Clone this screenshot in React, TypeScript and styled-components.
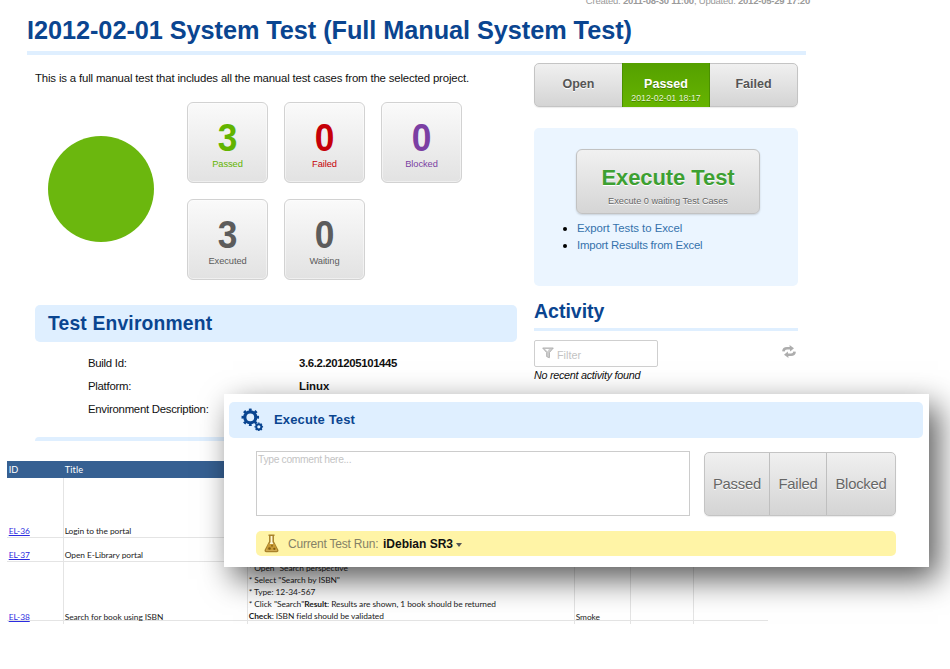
import React from "react";
import styled, { createGlobalStyle } from "styled-components";

const GlobalStyle = createGlobalStyle`
  html, body { margin: 0; padding: 0; background: #fff; overflow: hidden; }
  * { box-sizing: border-box; }
`;

const sans = `"Liberation Sans", Arial, sans-serif`;
const sheetFont = `Lato, "Open Sans", sans-serif`;
const navy = "#0a4590";
const paleBlue = "#dfefff";

const Page = styled.div`
  position: relative;
  width: 950px;
  height: 669px;
  overflow: hidden;
  background: #fff;
  color: #111;
  font-family: ${sans};
  display: flex;
  flex-direction: column;
`;

const Report = styled.section`
  height: 461px;
  flex: none;
  overflow: hidden;
`;

const Meta = styled.div`
  width: 810px;
  margin-top: -5px;
  height: 12px;
  line-height: 12px;
  font-size: 9.5px;
  letter-spacing: -0.22px;
  text-align: right;
  color: #9a9a9a;
`;

const PageTitle = styled.h1`
  margin: 0 0 0 27px;
  width: 779px;
  height: 48px;
  padding-top: 6px;
  line-height: 34px;
  font-size: 25.3px;
  letter-spacing: -0.06px;
  color: ${navy};
  border-bottom: 4px solid ${paleBlue};
  white-space: nowrap;
`;

const Columns = styled.div`
  display: flex;
  gap: 17px;
  padding-left: 35px;
`;

const Main = styled.main`
  width: 482px;
`;

const Side = styled.aside`
  width: 264px;
  padding-top: 8px;
`;

const Description = styled.p`
  margin: 15px 0 0;
  line-height: 17px;
  font-size: 11.4px;
  letter-spacing: -0.16px;
  white-space: nowrap;
`;

const Summary = styled.div`
  display: flex;
  gap: 33.5px;
  margin-top: 15px;
  height: 203px;
`;

const Pie = styled.div`
  width: 106px;
  height: 106px;
  margin: 34px 0 0 12.5px;
  border-radius: 50%;
  background: #6bb70e;
`;

const Tiles = styled.div`
  display: grid;
  grid-template-columns: repeat(3, 81px);
  grid-auto-rows: 81px;
  gap: 16px;
`;

const Tile = styled.div<{ $color: string }>`
  border: 1.5px solid #d2d2d2;
  border-radius: 6px;
  background: linear-gradient(#fafafa, #e2e2e2);
  box-shadow: inset 0 0 0 1px rgba(255, 255, 255, 0.45);
  color: ${(p) => p.$color};
  text-align: center;
  padding-top: 15px;
`;

const Count = styled.div`
  font-size: 38px;
  line-height: 41px;
  font-weight: bold;
  transform: scaleX(0.93);
`;

const TileLabel = styled.div`
  margin-top: -1px;
  font-size: 9.3px;
  line-height: 12px;
  letter-spacing: -0.08px;
`;

const SectionBar = styled.h2`
  margin: 0;
  height: 37px;
  padding-left: 13px;
  border-radius: 5px;
  background: ${paleBlue};
  color: ${navy};
  font-size: 19.3px;
  line-height: 38px;
  letter-spacing: 0.18px;
`;

const Facts = styled.dl`
  margin: 9.5px 0 0 53px;
  display: grid;
  grid-template-columns: 211px 1fr;
  grid-auto-rows: 23.4px;
  line-height: 23.4px;
  font-size: 11.4px;
  letter-spacing: -0.28px;
  dd { margin: 0; font-weight: bold; letter-spacing: -0.36px; }
  dd + dt + dd { letter-spacing: 0; }
`;

const NextBar = styled.div`
  margin-top: 15.5px;
  height: 4px;
  border-radius: 4px 4px 0 0;
  background: ${paleBlue};
`;

const Segments = styled.div<{ $columns: string; $height: number }>`
  display: grid;
  grid-template-columns: ${(p) => p.$columns};
  height: ${(p) => p.$height}px;
  border: 1.5px solid #c4c4c4;
  border-radius: 5px;
  background: linear-gradient(#f0f0f0, #d4d4d4);
  box-shadow: 0 1px 1px rgba(0, 0, 0, 0.08);
`;

const StatusSegment = styled.div<{ $active?: boolean }>`
  margin: ${(p) => (p.$active ? "-1px 0" : "0")};
  padding-top: ${(p) => (p.$active ? 13 : 12)}px;
  background: ${(p) => (p.$active ? "linear-gradient(#55a000, #66b400)" : "none")};
  border: solid ${(p) => (p.$active ? "#4b9000" : "transparent")};
  border-width: ${(p) => (p.$active ? "0 1px" : "0")};
  color: ${(p) => (p.$active ? "#fff" : "#555")};
  text-shadow: 0 1px 0 ${(p) => (p.$active ? "rgba(0,0,0,.3)" : "#fff")};
  text-align: center;
  font-size: 12.5px;
  font-weight: bold;
  line-height: 16px;
`;

const Stamp = styled.div`
  margin-top: 1px;
  font-size: 8.8px;
  font-weight: normal;
  line-height: 11px;
  color: #e6f5d3;
`;

const ActionPanel = styled.div`
  height: 158px;
  margin-top: 21px;
  padding: 21px 38px 0 42px;
  border-radius: 5px;
  background: #ebf5ff;
`;

const ExecuteButton = styled.button`
  display: block;
  width: 184px;
  height: 65px;
  padding: 7px 0 0;
  border: 1.5px solid #c2c2c2;
  border-radius: 6px;
  background: linear-gradient(#f1f1f1, #d5d5d5);
  box-shadow: 0 1px 2px rgba(0, 0, 0, 0.15);
  font-family: ${sans};
  text-align: center;
  strong {
    display: block;
    font-size: 22px;
    line-height: 29px;
    letter-spacing: -0.08px;
    color: #3da032;
    text-shadow: 0 1px 0 #fff;
  }
  span {
    display: block;
    margin-top: 2px;
    font-size: 9.2px;
    line-height: 14px;
    color: #666;
    text-shadow: 0 1px 0 #fff;
  }
`;

const Links = styled.ul`
  margin: 6px 0 0 1px;
  padding: 0;
  font-size: 11.4px;
  line-height: 17px;
  color: #000;
  li { height: 17px; }
  li::marker { font-size: 12.5px; }
  a { color: #3572ac; letter-spacing: -0.04px; }
  li + li a { letter-spacing: -0.2px; }
`;

const ActivityTitle = styled.h2`
  margin: 11px 0 0;
  height: 34px;
  line-height: 28px;
  font-size: 19.5px;
  color: ${navy};
  border-bottom: 3.5px solid ${paleBlue};
`;

const FilterRow = styled.div`
  display: flex;
  justify-content: space-between;
  margin-top: 9px;
`;

const FilterBox = styled.div`
  display: flex;
  align-items: center;
  gap: 3px;
  width: 124px;
  height: 27px;
  padding: 2px 0 0 7px;
  border: 1.5px solid #cfcfcf;
  border-radius: 2px;
  font-size: 10.8px;
  color: #c3c3c3;
  svg { margin-top: -3px; }
`;

const RefreshIcon = styled.svg`
  margin: 5px 2px 0 0;
`;

const EmptyNote = styled.em`
  display: block;
  margin-top: 1px;
  font-size: 10.8px;
  line-height: 14px;
  letter-spacing: -0.28px;
`;

const Sheet = styled.section`
  margin-left: 7px;
  width: 761px;
  height: 163px;
  overflow: hidden;
  font-family: ${sheetFont};
  font-size: 8.4px;
  letter-spacing: -0.06px;
  color: #1c1c1c;
`;

const SheetRow = styled.div<{ $height: number; $head?: boolean }>`
  display: grid;
  grid-template-columns: 56px 184px 327px 56px 63px 1fr;
  height: ${(p) => p.$height}px;
  ${(p) =>
    p.$head
      ? "background: #366092; color: #fff; font-size: 9.2px; letter-spacing: 0.1px; padding-bottom: 2px;"
      : "border-bottom: 1px solid #e4e4e4;"}
`;

const Cell = styled.div<{ $line?: boolean }>`
  display: flex;
  flex-direction: column;
  justify-content: flex-end;
  padding-left: 0.7px;
  line-height: 12px;
  white-space: pre;
  border-left: 1px solid ${(p) => (p.$line ? "#e4e4e4" : "transparent")};
  a { color: #2b2be0; text-decoration: underline; }
`;

const Steps = styled.div`
  margin-bottom: 0.6px;
`;

const Dialog = styled.section`
  position: absolute;
  left: 224px;
  top: 394px;
  width: 705px;
  height: 173px;
  padding: 8px 6px 0 5px;
  background: #fff;
  box-shadow: 9px 12px 30px rgba(0, 0, 0, 0.66);
`;

const DialogHeader = styled.header`
  display: flex;
  align-items: center;
  gap: 9px;
  height: 36px;
  padding: 0 0 1px 12px;
  border-radius: 5px;
  background: ${paleBlue};
  color: ${navy};
  font-size: 13px;
  font-weight: bold;
  letter-spacing: 0.15px;
`;

const DialogBody = styled.div`
  padding: 13px 27px 0;
`;

const Entry = styled.div`
  display: flex;
  gap: 14px;
`;

const CommentBox = styled.div`
  width: 434px;
  height: 65px;
  padding: 1px 0 0 1px;
  border: 1.5px solid #cccccc;
  font-size: 10.3px;
  line-height: 13px;
  letter-spacing: -0.32px;
  color: #c4c4c4;
`;

const Verdicts = styled(Segments)`
  margin-top: 1px;
  width: 192px;
`;

const Verdict = styled.div`
  display: flex;
  align-items: center;
  justify-content: center;
  padding-bottom: 1px;
  font-size: 14.8px;
  letter-spacing: -0.2px;
  color: #666;
  text-shadow: 0 1px 0 #fff;
  & + & { border-left: 1.5px solid #bfbfbf; }
`;

const RunBar = styled.div`
  display: flex;
  align-items: center;
  margin-top: 15px;
  width: 640px;
  height: 25px;
  padding-left: 8px;
  border-radius: 5px;
  background: #fff4a6;
  font-size: 12px;
  letter-spacing: -0.2px;
  color: #858166;
  svg { margin-right: 9px; }
  span { width: 95px; white-space: nowrap; }
  strong { font-size: 12px; letter-spacing: 0; color: #111; }
`;

const Caret = styled.i`
  margin: 3px 0 0 3px;
  border: solid transparent;
  border-width: 4px 3px 0;
  border-top-color: #555;
`;

const tiles = [
  { count: 3, label: "Passed", color: "#62b400" },
  { count: 0, label: "Failed", color: "#c60008" },
  { count: 0, label: "Blocked", color: "#7b3fa3" },
  { count: 3, label: "Executed", color: "#5c5c5c" },
  { count: 0, label: "Waiting", color: "#5c5c5c" },
];

const facts = [
  ["Build Id:", "3.6.2.201205101445"],
  ["Platform:", "Linux"],
  ["Environment Description:", ""],
];

const Gears = () => (
  <svg width="24" height="24" viewBox="0 0 24 24" fill="none" stroke={navy}>
    <circle cx="9.3" cy="9.3" r="5.5" strokeWidth="3.2" />
    <circle cx="9.3" cy="9.3" r="7.4" strokeWidth="2.8" pathLength="80" strokeDasharray="4.6 5.4" strokeDashoffset="2.3" />
    <circle cx="17.8" cy="18.8" r="2.6" strokeWidth="2" />
    <circle cx="17.8" cy="18.8" r="3.7" strokeWidth="1.2" pathLength="80" strokeDasharray="5 5" strokeDashoffset="2.5" />
  </svg>
);

const Flask = () => (
  <svg width="15" height="19" viewBox="0 0 15 19">
    <path d="M4.500 1.200h6M5.800 1.500v6.200L1.400 16q-.5 1.600 1 1.600h10.200q1.500 0 1-1.600L9.200 7.700V1.500" fill="#fff8d6" stroke="#a9822a" strokeWidth="1.5" />
    <path d="M4.300 10h6.400l2.600 6.800H1.800z" fill="#c79a35" />
    <circle cx="5.500" cy="14.500" r="1.300" fill="#7d5a12" />
    <circle cx="8" cy="11.800" r="1" fill="#8d6819" />
    <circle cx="10.300" cy="14.800" r="1.100" fill="#7d5a12" />
  </svg>
);

const Funnel = () => (
  <svg width="12" height="12" viewBox="0 0 12 12">
    <path d="M.7 1h10.600L7.400 5.500v5.200L4.700 9.600V5.500z" fill="#cfcfcf" stroke="#b0b0b0" strokeWidth="1" />
    <path d="M3 2h4L5.500 4.500z" fill="#fff" />
  </svg>
);

const Refresh = () => (
  <RefreshIcon width="14" height="13" viewBox="0 0 14 13" fill="none" stroke="#adadad" strokeWidth="2.6">
    <path d="M1.400 6.400C1.600 4 3.500 3.300 5 3.300h3.500" />
    <path d="M7.500 0l4.500 3.300L8.200 6.600z" fill="#adadad" stroke="none" />
    <path d="M12.600 6.600C12.400 9 10.500 9.700 9 9.700H5.500" />
    <path d="M6.500 13L2 9.700l3.800-3.300z" fill="#adadad" stroke="none" />
  </RefreshIcon>
);

export default function App() {
  return (
    <>
      <GlobalStyle />
      <Page>
        <Report>
          <Meta>
            Created: <b>2011-08-30 11:00</b>, Updated: <b>2012-05-29 17:20</b>
          </Meta>
          <PageTitle>I2012-02-01 System Test (Full Manual System Test)</PageTitle>
          <Columns>
            <Main>
              <Description>
                This is a full manual test that includes all the manual test cases from the selected project.
              </Description>
              <Summary>
                <Pie />
                <Tiles>
                  {tiles.map((t) => (
                    <Tile key={t.label} $color={t.color}>
                      <Count>{t.count}</Count>
                      <TileLabel>{t.label}</TileLabel>
                    </Tile>
                  ))}
                </Tiles>
              </Summary>
              <SectionBar>Test Environment</SectionBar>
              <Facts>
                {facts.map(([name, value]) => (
                  <React.Fragment key={name}>
                    <dt>{name}</dt>
                    <dd>{value}</dd>
                  </React.Fragment>
                ))}
              </Facts>
              <NextBar />
            </Main>
            <Side>
              <Segments $columns="1fr 88px 1fr" $height={44}>
                <StatusSegment>Open</StatusSegment>
                <StatusSegment $active>
                  Passed
                  <Stamp>2012-02-01 18:17</Stamp>
                </StatusSegment>
                <StatusSegment>Failed</StatusSegment>
              </Segments>
              <ActionPanel>
                <ExecuteButton>
                  <strong>Execute Test</strong>
                  <span>Execute 0 waiting Test Cases</span>
                </ExecuteButton>
                <Links>
                  <li><a>Export Tests to Excel</a></li>
                  <li><a>Import Results from Excel</a></li>
                </Links>
              </ActionPanel>
              <ActivityTitle>Activity</ActivityTitle>
              <FilterRow>
                <FilterBox>
                  <Funnel />
                  Filter
                </FilterBox>
                <Refresh />
              </FilterRow>
              <EmptyNote>No recent activity found</EmptyNote>
            </Side>
          </Columns>
        </Report>

        <Sheet>
          <SheetRow $height={17} $head>
            <Cell>ID</Cell>
            <Cell>Title</Cell>
          </SheetRow>
          <SheetRow $height={60}>
            <Cell><a>EL-36</a></Cell>
            <Cell $line>Login to the portal</Cell>
          </SheetRow>
          <SheetRow $height={24}>
            <Cell><a>EL-37</a></Cell>
            <Cell $line>Open E-Library portal</Cell>
          </SheetRow>
          <SheetRow $height={59}>
            <Cell><a>EL-38</a></Cell>
            <Cell $line>Search for book using ISBN</Cell>
            <Cell $line>
              <Steps>
                <div>* Open "Search perspective"</div>
                <div>* Select "Search by ISBN"</div>
                <div>* Type: 12-34-567</div>
                <div>* Click "Search"<b>Result</b>: Results are shown, 1 book should be returned</div>
                <div><b>Check</b>: ISBN field should be validated</div>
              </Steps>
            </Cell>
            <Cell $line>Smoke</Cell>
            <Cell $line />
            <Cell $line />
          </SheetRow>
          <SheetRow $height={10}>
            <Cell />
            <Cell $line />
            <Cell $line />
            <Cell $line />
            <Cell $line />
            <Cell $line />
          </SheetRow>
        </Sheet>

        <Dialog>
          <DialogHeader>
            <Gears />
            Execute Test
          </DialogHeader>
          <DialogBody>
            <Entry>
              <CommentBox>Type comment here...</CommentBox>
              <Verdicts $columns="64px 57px 1fr" $height={64}>
                <Verdict>Passed</Verdict>
                <Verdict>Failed</Verdict>
                <Verdict>Blocked</Verdict>
              </Verdicts>
            </Entry>
            <RunBar>
              <Flask />
              <span>Current Test Run:</span>
              <strong>iDebian SR3</strong>
              <Caret />
            </RunBar>
          </DialogBody>
        </Dialog>
      </Page>
    </>
  );
}
